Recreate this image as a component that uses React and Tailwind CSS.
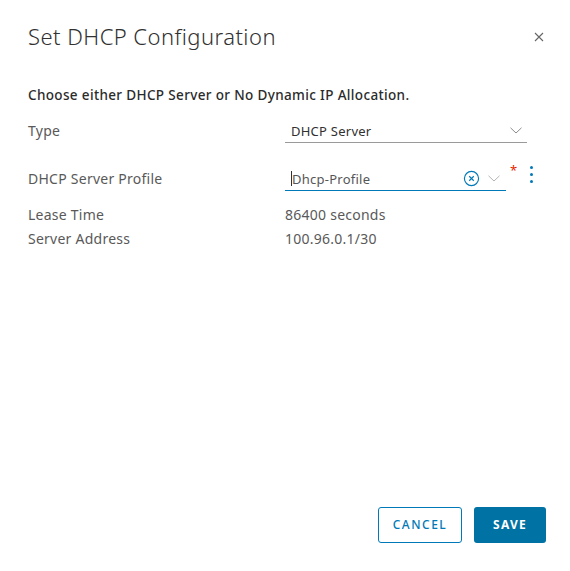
import React from "react";

const font = { fontFamily: "'Noto Sans', 'Open Sans', sans-serif" };

function Chevron({ className = "" }) {
  return (
    <svg className={className} width="12" height="7" viewBox="0 0 12 7" fill="none" stroke="currentColor" strokeWidth="1">
      <path d="M0.5 0.8 L6 6 L11.5 0.8" />
    </svg>
  );
}

export default function App() {
  return (
    <div className="w-[570px] h-[571px] bg-white flex flex-col text-[#595959] tracking-[0.25px]" style={font}>
      <div className="flex items-center justify-between pl-[28px] pr-[26px] pt-[21px] h-[51px]">
        <h1 className="text-[22px] leading-[30px] font-light text-[#313131] tracking-[0.45px]">Set DHCP Configuration</h1>
        <svg width="10" height="10" viewBox="0 0 10 10" stroke="#666" strokeWidth="1.1" className="mt-[2px]">
          <path d="M1 1 L9 9 M9 1 L1 9" />
        </svg>
      </div>

      <div className="px-[28px] pt-[34px] flex-1">
        <p className="text-[13.5px] leading-[20px] font-medium text-[#2b2b2b] tracking-[0.35px]">Choose either DHCP Server or No Dynamic IP Allocation.</p>

        <div className="flex items-center mt-[14px] h-[24px]">
          <div className="w-[257px] text-[14px] leading-[20px]">Type</div>
          <div className="w-[242px] flex items-center justify-between border-b border-[#9a9a9a] h-[24px] pl-[6px] pr-[5px]">
            <span className="text-[13px] leading-[20px] text-[#313131]">DHCP Server</span>
            <Chevron className="text-[#8c8c8c]" />
          </div>
        </div>

        <div className="flex items-center mt-[24px] h-[24px]">
          <div className="w-[257px] text-[14px] leading-[20px]">DHCP Server Profile</div>
          <div className="w-[221px] flex items-center border-b border-[#0079b8] h-[24px] pl-[6px]">
            <span className="w-px h-[15px] bg-[#313131]" />
            <span className="text-[13px] leading-[20px] text-[#565656]">Dhcp-Profile</span>
            <span className="flex-1" />
            <svg width="17" height="17" viewBox="0 0 18 18" fill="none" stroke="#0079b8" strokeWidth="1.2">
              <circle cx="9" cy="9" r="7.5" />
              <path d="M6.6 6.6 L11.4 11.4 M11.4 6.6 L6.6 11.4" />
            </svg>
            <Chevron className="text-[#b5b5b5] ml-[8px] mr-[6px]" />
          </div>
          <span className="ml-[4px] text-[#e62700] text-[13px] leading-[13px] self-start mt-[-3px]">*</span>
          <div className="ml-[13px] flex flex-col gap-[4px] self-start mt-[-1px]">
            <span className="w-[3px] h-[3px] rounded-full bg-[#0079b8]" />
            <span className="w-[3px] h-[3px] rounded-full bg-[#0079b8]" />
            <span className="w-[3px] h-[3px] rounded-full bg-[#0079b8]" />
          </div>
        </div>

        <div className="flex text-[14px] leading-[24px] mt-[12px]">
          <div className="w-[257px]">Lease Time</div>
          <div>86400 seconds</div>
        </div>
        <div className="flex text-[14px] leading-[24px]">
          <div className="w-[257px]">Server Address</div>
          <div>100.96.0.1/30</div>
        </div>
      </div>

      <div className="flex justify-end gap-[12px] pr-[24px] pb-[28px]">
        <button className="w-[84px] h-[36px] border border-[#0079b8] rounded-[3px] text-[#0079b8] text-[12px] tracking-[1.5px] font-medium">CANCEL</button>
        <button className="w-[72px] h-[36px] bg-[#0072a3] rounded-[3px] text-white text-[12px] tracking-[1.2px] font-bold">SAVE</button>
      </div>
    </div>
  );
}
